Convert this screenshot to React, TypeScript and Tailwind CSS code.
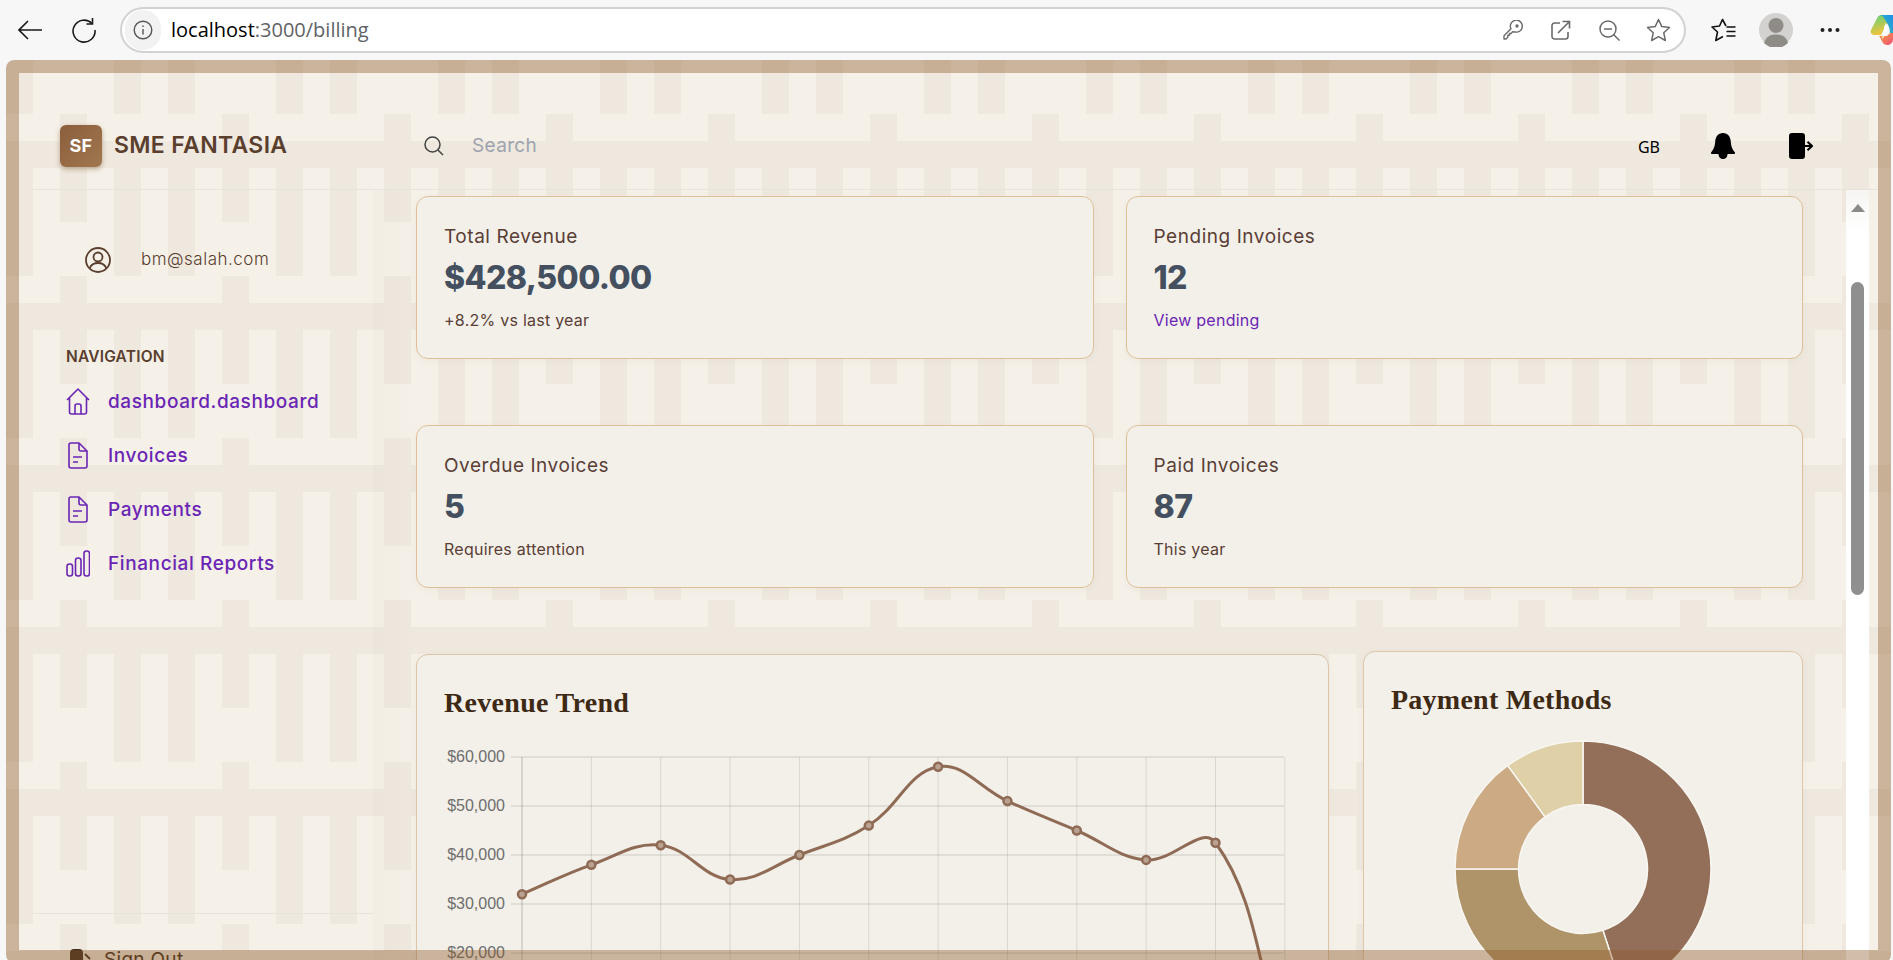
import React from "react";

const sans = "font-['Inter','Noto_Sans',sans-serif]";
const PURPLE = "#6b25b5";

function Chrome() {
  return (
    <div className="h-[60px] bg-[#f7f7f7] flex items-center relative shrink-0">
      <svg className="ml-[18px] w-[24px] h-[20px] shrink-0" viewBox="0 0 24 20" fill="none" stroke="#1a1a1a" strokeWidth="1.6">
        <path d="M10 1 1 10l9 9M1 10h23" />
      </svg>
      <svg className="ml-[29px] w-[26px] h-[26px] shrink-0" viewBox="0 0 26 26" fill="none" stroke="#1a1a1a" strokeWidth="1.6">
        <path d="M21 6.5A11 11 0 1 0 24 13" />
        <path d="M21.5 1v6h-6" />
      </svg>
      <div className="ml-[23px] w-[1566px] h-[46px] rounded-full bg-white border-2 border-[#d2d2d2] flex items-center shrink-0">
        <div className="ml-[3px] w-[36px] h-[40px] rounded-full bg-[#f2f2f2] flex items-center justify-center">
          <svg className="w-[20px] h-[20px]" viewBox="0 0 20 20" fill="none" stroke="#555" strokeWidth="1.4">
            <circle cx="10" cy="10" r="8.8" />
            <path d="M10 9v5.5M10 5.5v1.4" />
          </svg>
        </div>
        <div className="ml-[10px] text-[20px] leading-none font-['Open_Sans',sans-serif] text-[#5f6368]">
          <span className="text-black">localhost</span>:3000/billing
        </div>
        <div className="ml-auto flex items-center gap-[28px] mr-[13px]">
          <svg className="w-[20px] h-[20px] translate-x-[2px]" viewBox="0 0 20 20" fill="none" stroke="#6a6a6a" strokeWidth="1.4" strokeLinejoin="round">
            <path d="M7.500 7.500A6 6 0 1 1 12 12c-.8 0-1.500-.1-2-.4L8 13.500H6.500V15.200H4.800V17.200L3 19H1V15.800L8 8.800A6 6 0 0 1 7.500 7.500z" />
            <circle cx="14" cy="6" r="1" fill="#6a6a6a" />
          </svg>
          <svg className="w-[20px] h-[20px] translate-x-[2px]" viewBox="0 0 20 20" fill="none" stroke="#6a6a6a" strokeWidth="1.6">
            <path d="M9 3H3.500A2.500 2.500 0 0 0 1 5.500v11A2.500 2.500 0 0 0 3.500 19h11a2.500 2.500 0 0 0 2.500-2.500V12" />
            <path d="M7 13 18.500 1.500M11.500 1.500h7v7" />
          </svg>
          <svg className="w-[21px] h-[21px] translate-x-[2px]" viewBox="0 0 21 21" fill="none" stroke="#6a6a6a" strokeWidth="1.5">
            <circle cx="9" cy="9" r="8" />
            <path d="M5 9h8M14.500 14.500l6 6" />
          </svg>
          <svg className="w-[25px] h-[24px]" viewBox="0 0 25 24" fill="none" stroke="#6a6a6a" strokeWidth="1.5">
            <path d="M12.500 1.500 15.800 8.600l7.700.9-5.700 5.300 1.500 7.700-6.800-3.800-6.800 3.800 1.500-7.700L1.500 9.500l7.700-.9z" strokeLinejoin="round" />
          </svg>
        </div>
      </div>
      <svg className="ml-[25px] w-[25px] h-[24px] shrink-0" viewBox="0 0 25 24" fill="none" stroke="#111" strokeWidth="1.6">
        <path d="M15 8 11.500 1.500 8.500 8 1 9l5.500 5L4.800 22.500 12 18.500" strokeLinejoin="round" />
        <path d="M15.500 9h9M15.500 13.500h9M15.500 18h9" />
      </svg>
      <svg className="ml-[23px] w-[34px] h-[34px] shrink-0" viewBox="0 0 34 34">
        <circle cx="17" cy="17" r="17" fill="#d3d2d0" />
        <circle cx="17" cy="12.500" r="7.500" fill="#8f8c88" />
        <path d="M5 30c2-7 7-8.500 12-8.500s10 1.500 12 8.500a17 17 0 0 1-24 0z" fill="#8f8c88" />
      </svg>
      <svg className="ml-[27px] w-[20px] h-[6px] shrink-0" viewBox="0 0 20 6" fill="#222">
        <circle cx="2.500" cy="3" r="2" />
        <circle cx="10" cy="3" r="2" />
        <circle cx="17.500" cy="3" r="2" />
      </svg>
      <svg className="ml-[30px] w-[23px] h-[30px] shrink-0" viewBox="0 0 23 30">
        <defs>
          <linearGradient id="cpa" x1="1" y1="0" x2="0" y2="1">
            <stop offset="0" stopColor="#1f8fe8" />
            <stop offset="1" stopColor="#38c4b0" />
          </linearGradient>
          <linearGradient id="cpb" x1="0" y1="0" x2="0.300" y2="1">
            <stop offset="0" stopColor="#5fd07a" />
            <stop offset="1" stopColor="#f3c53a" />
          </linearGradient>
          <linearGradient id="cpc" x1="0" y1="0" x2="1" y2="1">
            <stop offset="0" stopColor="#f5a030" />
            <stop offset="1" stopColor="#ee4f7e" />
          </linearGradient>
        </defs>
        <path d="M8 1.500C9 .5 10 0 12 0h11v17L17 8 11 20H5C2 20 0 18 1 15z" fill="url(#cpb)" />
        <path d="M10 0h13v20h-3c0-6-1-9-3-12l-3-5C13.500 1.500 12 .5 10 0z" fill="url(#cpa)" />
        <path d="M9 21h8l3-3 3 0v6c0 4-3 6-6 6-3 0-5-3-6-6z" fill="url(#cpc)" />
        <path d="M16 8c1 3 1 8-1 12-1 2-2 3-3 4 1-4 2-8 2-12z" fill="#fff" />
      </svg>
    </div>
  );
}

function Header() {
  return (
    <div className="h-[117px] shrink-0 border-b border-[#e9e4db] ml-[14px] flex items-center pt-[29px]">
      <div className="w-[341px] shrink-0 flex items-center ml-[27px] mr-[-27px]">
        <div className="w-[42px] h-[42px] rounded-md bg-gradient-to-br from-[#8b5e3c] to-[#a0774f] shadow-[0_2px_5px_rgba(120,80,40,0.45)] flex items-center justify-center text-white font-bold text-[18px] font-['Inter',sans-serif] tracking-[0.2px]">
          SF
        </div>
        <div className={`ml-[12px] text-[23px] font-semibold text-[#5a3e2e] tracking-[0.35px] whitespace-nowrap ${sans}`}>SME FANTASIA</div>
      </div>
      <svg className="ml-[50px] w-[20px] h-[20px] shrink-0" viewBox="0 0 20 20" fill="none" stroke="#444" strokeWidth="1.5">
        <circle cx="8.500" cy="8.500" r="7.500" />
        <path d="m14 14 5 5" />
      </svg>
      <div className={`ml-[28px] mt-[2px] text-[19px] text-[#9ca3af] tracking-[0.35px] ${sans}`}>Search</div>
      <div className="ml-auto flex items-center">
        <div className="text-[16px] text-black font-['Noto_Sans',sans-serif] font-normal leading-none mt-[3px]">GB</div>
        <svg className="ml-[51px] w-[24px] h-[26px]" viewBox="0 0 24 26" fill="#000">
          <path d="M12 0c5 0 7.500 4 7.800 8.500.3 4 .6 6.500 4.200 11 .3.600 0 1.500-.8 1.500H.8c-.8 0-1.100-.9-.8-1.500C3.600 15 3.900 12.500 4.200 8.500 4.500 4 7 0 12 0z" />
          <path d="M7.500 21h9c0 3-2 5-4.500 5s-4.500-2-4.500-5z" />
        </svg>
        <svg className="ml-[54px] mr-[65px] w-[24px] h-[26px]" viewBox="0 0 24 26">
          <rect x="0" y="0" width="16" height="26" rx="3" fill="#000" />
          <path d="M16 13h6.500" fill="none" stroke="#000" strokeWidth="2" />
          <path d="M18.500 8.800 23 13l-4.500 4.200" fill="none" stroke="#000" strokeWidth="2" />
        </svg>
      </div>
    </div>
  );
}

const NavIcon = ({ kind }: { kind: string }) => {
  if (kind === "home")
    return (
      <svg className="w-[24px] h-[27px] shrink-0" viewBox="0 0 24 27" fill="none" stroke={PURPLE} strokeWidth="1.6" strokeLinejoin="round">
        <path d="M1 12 12 1l11 11M3.500 10v14a2 2 0 0 0 2 2h13a2 2 0 0 0 2-2V10" />
        <path d="M9 26v-8a2 2 0 0 1 2-2h2a2 2 0 0 1 2 2v8" />
      </svg>
    );
  if (kind === "doc")
    return (
      <svg className="w-[24px] h-[27px] shrink-0" viewBox="0 0 24 27" fill="none" stroke={PURPLE} strokeWidth="1.6" strokeLinejoin="round">
        <path d="M5 1h8l8 8v15a2 2 0 0 1-2 2H5a2 2 0 0 1-2-2V3a2 2 0 0 1 2-2z" />
        <path d="M13 1v6a2 2 0 0 0 2 2h6M7 15h9M7 20h5" />
      </svg>
    );
  return (
    <svg className="w-[24px] h-[27px] shrink-0" viewBox="0 0 24 27" fill="none" stroke={PURPLE} strokeWidth="1.6">
      <rect x="1" y="14" width="5.500" height="12" rx="2.500" />
      <rect x="9.500" y="8" width="5.500" height="18" rx="2.500" />
      <rect x="18" y="1" width="5.500" height="25" rx="2.500" />
    </svg>
  );
};

function Sidebar() {
  const items = [
    ["home", "dashboard.dashboard"],
    ["doc", "Invoices"],
    ["doc", "Payments"],
    ["bar", "Financial Reports"],
  ];
  return (
    <div className={`w-[354px] shrink-0 flex flex-col ${sans}`}>
      <div className="ml-[66px] mt-[57px] flex items-center h-[26px]">
        <svg className="w-[26px] h-[26px] shrink-0" viewBox="0 0 26 26" fill="none" stroke="#5a3e2e" strokeWidth="1.8">
          <circle cx="13" cy="13" r="12" />
          <circle cx="13" cy="10" r="4.500" />
          <path d="M4.800 21c1.500-3.500 4.500-5 8.200-5s6.700 1.500 8.200 5" />
        </svg>
        <div className="ml-[30px] text-[17px] text-[#5a3e2e] font-light tracking-[0.5px]">bm@salah.com</div>
      </div>
      <div className="ml-[47px] mt-[74px] text-[15.500px] leading-[20px] font-semibold text-[#5a3e2e] tracking-[0.2px]">NAVIGATION</div>
      <div className="ml-[47px] mt-[7px] flex flex-col">
        {items.map(([k, t]) => (
          <div key={t} className="h-[54px] flex items-center">
            <NavIcon kind={k} />
            <div className="ml-[18px] mt-[3px] text-[19px] font-medium tracking-[0.6px] text-[#6b25b5] whitespace-nowrap">{t}</div>
          </div>
        ))}
      </div>
      <div className="mt-auto ml-[14px] h-[50px] border-t border-[#e9e4db] overflow-hidden shrink-0 pt-[33px] pl-[37px] flex items-start">
        <svg className="w-[21px] h-[26px] shrink-0 mr-[13px] mt-[2px]" viewBox="0 0 21 26" fill="#3f2c1e">
          <rect width="13" height="26" rx="4" />
          <path d="m15 5 5 5" fill="none" stroke="#3f2c1e" strokeWidth="1.800" />
        </svg>
        <div className="text-[19px] text-[#3d2914] leading-[26px] tracking-[0.3px]">Sign Out</div>
      </div>
    </div>
  );
}

function Stat({ title, value, sub, link }: { title: string; value: string; sub: string; link?: boolean }) {
  return (
    <div className="h-[163px] rounded-xl border border-[#dfbf98] bg-[#f3f0e9] px-[27px] pt-[26px] shadow-[0_2px_8px_rgba(90,60,30,0.04)]">
      <div className="text-[19px] leading-[27px] text-[#5a3e36] tracking-[0.55px]">{title}</div>
      <div className="text-[32px] leading-[42px] mt-[7px] font-extrabold text-[#44505f] tracking-[-0.6px]">{value}</div>
      <div className={`text-[16px] leading-[24px] mt-[9px] tracking-[0.25px] ${link ? "text-[#6b25b5]" : "text-[#5a3e36]"}`}>{sub}</div>
    </div>
  );
}

function RevenueChart() {
  const xs = Array.from({ length: 12 }, (_, i) => 79 + i * 69.35);
  const vals = [32, 38, 42, 35, 40, 46, 58, 51, 45, 39, 42.5, 0];
  const Y = (v: number) => 17 + ((60 - v) / 10) * 49;
  const pts = vals.map((v, i) => ({ x: xs[i], y: Y(v) }));
  const t = 0.4;
  const ctrl = pts.map((p, i) => {
    const a = pts[i - 1] ?? p;
    const b = pts[i + 1] ?? p;
    const d1 = Math.hypot(p.x - a.x, p.y - a.y);
    const d2 = Math.hypot(b.x - p.x, b.y - p.y);
    const s1 = d1 / (d1 + d2 || 1);
    const s2 = d2 / (d1 + d2 || 1);
    return {
      px: p.x - t * s1 * (b.x - a.x),
      py: p.y - t * s1 * (b.y - a.y),
      nx: p.x + t * s2 * (b.x - a.x),
      ny: p.y + t * s2 * (b.y - a.y),
    };
  });
  let d = `M${pts[0].x} ${pts[0].y}`;
  for (let i = 1; i < pts.length; i++) {
    d += ` C${ctrl[i - 1].nx} ${ctrl[i - 1].ny} ${ctrl[i].px} ${ctrl[i].py} ${pts[i].x} ${pts[i].y}`;
  }
  return (
    <svg className="block mt-[16px] ml-[-1px]" width="860" height="230" viewBox="0 0 860 230">
      {[60, 50, 40, 30, 20].map((v) => (
        <g key={v}>
          <line x1="68" x2="841" y1={Y(v)} y2={Y(v)} stroke="rgba(0,0,0,0.1)" strokeWidth="1.500" />
          <text x="62" y={Y(v) + 5} textAnchor="end" fontSize="16" fill="#6e6e6e" fontFamily="Liberation Sans, sans-serif">
            ${v},000
          </text>
        </g>
      ))}
      {xs.map((x, i) => (
        <line key={x} x1={x} x2={x} y1="17" y2="230" stroke={i === 0 ? "rgba(0,0,0,0.22)" : "rgba(0,0,0,0.1)"} strokeWidth="1" />
      ))}
      <path d={d} fill="none" stroke="#8f6b56" strokeWidth="3" />
      {pts.slice(0, 11).map((p) => (
        <circle key={p.x} cx={p.x} cy={p.y} r="4" fill="#b9a28f" stroke="#8f6b56" strokeWidth="2.500" />
      ))}
    </svg>
  );
}

function Donut() {
  const cx = 129;
  const cy = 129;
  const R = 128;
  const r = 64.5;
  const segs = [
    [0, 45, "#936e59"],
    [45, 75, "#af9469"],
    [75, 90, "#cbaa84"],
    [90, 100, "#dfd0a8"],
  ] as const;
  const P = (rad: number, pc: number) => {
    const a = (pc / 100) * 2 * Math.PI;
    return `${cx + rad * Math.sin(a)} ${cy - rad * Math.cos(a)}`;
  };
  return (
    <svg className="block mx-auto mt-[19px]" width="258" height="258" viewBox="0 0 258 258">
      {segs.map(([a, b, c]) => (
        <path
          key={c}
          d={`M${P(R, a)} A${R} ${R} 0 ${b - a > 50 ? 1 : 0} 1 ${P(R, b)} L${P(r, b)} A${r} ${r} 0 ${b - a > 50 ? 1 : 0} 0 ${P(r, a)} Z`}
          fill={c}
          stroke="#f8f6f1"
          strokeWidth="1.500"
        />
      ))}
    </svg>
  );
}

function Main() {
  return (
    <div className={`flex-1 min-w-0 pl-[43px] pr-[43px] pt-[6px] overflow-hidden bg-gradient-to-r from-[#5a3e2e]/[0.02] to-transparent to-[45px] ${sans}`}>
      <div className="grid grid-cols-2 gap-x-[32px] gap-y-[66px]">
        <Stat title="Total Revenue" value="$428,500.00" sub="+8.2% vs last year" />
        <Stat title="Pending Invoices" value="12" sub="View pending" link />
        <Stat title="Overdue Invoices" value="5" sub="Requires attention" />
        <Stat title="Paid Invoices" value="87" sub="This year" />
      </div>
      <div className="mt-[66px] flex items-start gap-[34px]">
        <div className="w-[913px] h-[400px] shrink-0 rounded-xl border border-[#dcc4a6] bg-[#f3f0e9] px-[27px] pt-[27px] shadow-[0_2px_8px_rgba(90,60,30,0.04)]">
          <div className="font-['Liberation_Serif',serif] font-bold text-[28px] leading-[42px] text-[#3d2914] tracking-[0.3px]">Revenue Trend</div>
          <RevenueChart />
        </div>
        <div className="flex-1 h-[400px] mt-[-3px] rounded-xl border border-[#e0c6a6] bg-[#f3f0e9] px-[27px] pt-[27px] shadow-[0_2px_8px_rgba(90,60,30,0.04)]">
          <div className="font-['Liberation_Serif',serif] font-bold text-[28px] leading-[42px] text-[#3d2914] tracking-[0.25px]">Payment Methods</div>
          <Donut />
        </div>
      </div>
    </div>
  );
}

function Scrollbar() {
  return (
    <div className="w-[23px] shrink-0 mr-[9px] bg-gradient-to-b from-[#f6f5f2] to-white to-[40px] flex flex-col items-center">
      <div className="mt-[14px] w-0 h-0 border-l-[7px] border-r-[7px] border-b-[8px] border-l-transparent border-r-transparent border-b-[#8a8a8a]" />
      <div className="mt-[70px] w-[13px] h-[313px] rounded-full bg-[#8f8f8f]" />
    </div>
  );
}

export default function App() {
  return (
    <div className="h-screen w-full overflow-hidden bg-[#f7f7f7] flex flex-col">
      <Chrome />
      <div className="relative ml-[6px] mr-[2px] h-[903px] shrink-0 rounded-lg overflow-hidden bg-[#f5f1e8] bg-[url('data:image/svg+xml,%3Csvg%20xmlns=%22http://www.w3.org/2000/svg%22%20width=%22162%22%20height=%22162%22%20fill=%22%23eee8de%22%3E%3Cpath%20d=%22M0,0h27v54H0zM108,0h27v54h-27zM54,54h27v27H54zM0,81h162v27H0zM0,108h27v54H0zM54,108h27v54H54zM108,108h27v54h-27z%22/%3E%3C/svg%3E')] bg-[length:162px_162px] flex flex-col pt-[13px] pl-[13px] pr-[13px]">
        <Header />
        <div className="flex-1 min-h-0 flex">
          <Sidebar />
          <Main />
          <Scrollbar />
        </div>
        <div className="absolute inset-0 rounded-lg border-[13px] border-[#8b5a2b]/40 pointer-events-none" />
      </div>
    </div>
  );
}
